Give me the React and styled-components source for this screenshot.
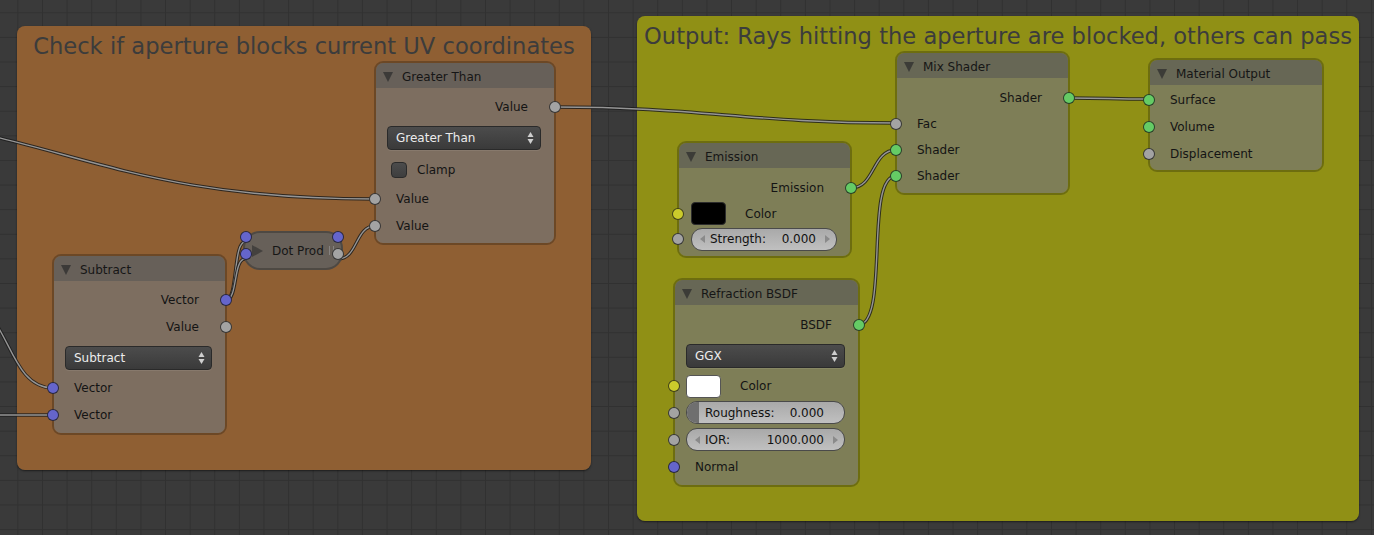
import styled, { createGlobalStyle } from "styled-components";

const GlobalStyle = createGlobalStyle`
  html, body {
    margin: 0;
    padding: 0;
  }
  body {
    background: #393939;
    font-family: "DejaVu Sans", "Noto Sans", sans-serif;
    overflow: hidden;
  }
`;

const SOCKET = {
  grey: "#a3a3a3",
  blue: "#6565cb",
  green: "#65cb65",
  yellow: "#cbcb2b",
};

const Canvas = styled.div`
  position: relative;
  width: 1374px;
  height: 535px;
  overflow: hidden;
  background-color: #3a3a3a;
  background-image: linear-gradient(90deg, #313131 1px, transparent 1px),
    linear-gradient(180deg, #313131 1px, transparent 1px);
  background-size: 24.62px 24.62px;
  background-position: 17.4px 0, 0 12.3px;
`;

const Frame = styled.section`
  position: absolute;
  left: ${(p) => p.$x}px;
  top: ${(p) => p.$y}px;
  width: ${(p) => p.$w}px;
  height: ${(p) => p.$h}px;
  box-sizing: border-box;
  padding-top: 7px;
  border-radius: 8px;
  background: ${(p) => p.$color};
  box-shadow: 0 1px 2px rgba(0, 0, 0, 0.5);
  display: flex;
  flex-direction: column;
  align-items: center;
`;

const FrameTitle = styled.h2`
  margin: 0;
  font-weight: normal;
  font-size: 22.6px;
  line-height: 26px;
  color: #3c3c3c;
  white-space: nowrap;
`;

const Wires = styled.svg`
  position: absolute;
  left: 0;
  top: 0;
  width: 1374px;
  height: 535px;
  pointer-events: none;
`;

const NodeBox = styled.div`
  position: absolute;
  left: ${(p) => p.$x}px;
  top: ${(p) => p.$y}px;
  width: ${(p) => p.$w}px;
  box-sizing: border-box;
  border: 2px solid rgba(0, 0, 0, 0.24);
  border-radius: 9px;
  font-size: 12px;
  color: #141414;
  display: flex;
  flex-direction: column;
`;

const Header = styled.div`
  height: 25px;
  box-sizing: border-box;
  padding: 3px 0 0 7px;
  display: flex;
  align-items: center;
  gap: 9px;
  border-radius: 7px 7px 0 0;
  background: rgba(96, 96, 96, 0.85);
  color: #161616;
`;

const Collapse = styled.span`
  width: 0;
  height: 0;
  border-left: 5px solid transparent;
  border-right: 5px solid transparent;
  border-top: 10px solid rgba(45, 45, 45, 0.75);
`;

const Body = styled.div`
  display: flex;
  flex-direction: column;
  padding: ${(p) => p.$pt}px 0 ${(p) => p.$pb}px;
  border-radius: 0 0 7px 7px;
  background: rgba(117, 117, 117, 0.69);
`;

const SocketRow = styled.div`
  position: relative;
  height: ${(p) => p.$h}px;
  display: flex;
  align-items: center;
  justify-content: ${(p) => (p.$out ? "flex-end" : "flex-start")};
  padding: ${(p) => (p.$out ? "0 26px 0 0" : "0 0 0 20px")};
`;

const WidgetRow = styled.div`
  position: relative;
  height: ${(p) => p.$h}px;
  display: flex;
  align-items: center;
  padding: 0 13px 0 ${(p) => p.$left ?? 11}px;
`;

const Socket = styled.span`
  position: absolute;
  top: 50%;
  ${(p) => (p.$out ? "right: -7px;" : "left: -7px;")}
  width: 12px;
  height: 12px;
  box-sizing: border-box;
  margin-top: -6px;
  border-radius: 50%;
  border: 1px solid rgba(20, 20, 20, 0.75);
  background: ${(p) => SOCKET[p.$type]};
`;

const Dropdown = styled.div`
  flex: 1;
  height: 24px;
  box-sizing: border-box;
  padding: 0 6px 0 8px;
  display: flex;
  align-items: center;
  justify-content: space-between;
  border: 1px solid #2a2a2a;
  border-radius: 4px;
  background: linear-gradient(#4c4c4c, #3a3a3a);
  color: #ececec;
  box-shadow: 0 1px 0 rgba(255, 255, 255, 0.08);
`;

const Checkbox = styled.span`
  width: 16px;
  height: 16px;
  margin-left: 3px;
  box-sizing: border-box;
  border: 1px solid #2a2a2a;
  border-radius: 4px;
  background: linear-gradient(#4c4c4c, #3e3e3e);
`;

const CheckLabel = styled.span`
  margin-left: 10px;
`;

const Swatch = styled.span`
  width: 35px;
  height: 23px;
  box-sizing: border-box;
  border: 1px solid ${(p) => (p.$white ? "#555" : "#2c2c2c")};
  border-radius: 4px;
  background: ${(p) => (p.$white ? "#ffffff" : "#000000")};
`;

const SwatchLabel = styled.span`
  margin-left: 19px;
`;

const Slider = styled.div`
  position: relative;
  flex: 1;
  height: 23px;
  box-sizing: border-box;
  padding: 0 6px 0 8px;
  display: flex;
  align-items: center;
  border: 1px solid #4a4a4a;
  border-radius: 11px;
  overflow: hidden;
  background: linear-gradient(#a9a9a9, #c0c0c0);
  color: #111;
`;

const SliderFill = styled.span`
  position: absolute;
  left: 0;
  top: 0;
  bottom: 0;
  width: 12px;
  background: #6f6f6f;
`;

const SliderText = styled.span`
  position: relative;
  flex: 1;
  display: flex;
  justify-content: space-between;
  margin: 0 9px 0 5px;
`;

const Collapsed = styled.div`
  position: absolute;
  left: 243px;
  top: 231px;
  width: 100px;
  height: 39px;
  box-sizing: border-box;
  padding-left: 7px;
  display: flex;
  align-items: center;
  border: 2px solid rgba(0, 0, 0, 0.24);
  border-radius: 17px;
  background: rgba(96, 96, 96, 0.85);
  font-size: 12px;
  color: #161616;
`;

const PlayTri = styled.span`
  width: 0;
  height: 0;
  border-top: 6px solid transparent;
  border-bottom: 6px solid transparent;
  border-left: 11px solid rgba(45, 45, 45, 0.6);
  margin-right: 9px;
`;

const Grip = styled.span`
  margin-left: 5px;
  width: 3px;
  height: 9px;
  border-left: 1px solid #9a9a9a;
  border-right: 1px solid #9a9a9a;
  opacity: 0.6;
`;

const PinSocket = styled(Socket)`
  top: ${(p) => p.$top}px;
  ${(p) => (p.$out ? "right: -3px;" : "left: -5px;")}
`;

const DropArrows = () => (
  <svg width="7" height="14" viewBox="0 0 7 14">
    <polygon points="0.5,6 3.5,1 6.5,6" fill="#cfcfcf" />
    <polygon points="0.5,8 3.5,13 6.5,8" fill="#cfcfcf" />
  </svg>
);

const Arrow = ({ dir, hidden }) => (
  <svg width="5" height="8" viewBox="0 0 5 8" style={{ visibility: hidden ? "hidden" : "visible", position: "relative" }}>
    <polygon points={dir === "l" ? "5,0 0,4 5,8" : "0,0 5,4 0,8"} fill="#8a8a8a" />
  </svg>
);

const Node = ({ x, y, w, title, pt, pb, children }) => (
  <NodeBox $x={x} $y={y} $w={w}>
    <Header>
      <Collapse />
      {title}
    </Header>
    <Body $pt={pt} $pb={pb}>
      {children}
    </Body>
  </NodeBox>
);

const Out = ({ h, type, children }) => (
  <SocketRow $h={h} $out>
    {children}
    <Socket $type={type} $out />
  </SocketRow>
);

const In = ({ h, type, children }) => (
  <SocketRow $h={h}>
    <Socket $type={type} />
    {children}
  </SocketRow>
);

const ValueSlider = ({ label, value, arrows, fill }) => (
  <Slider>
    {fill && <SliderFill />}
    <Arrow dir="l" hidden={!arrows} />
    <SliderText>
      <span>{label}</span>
      <span>{value}</span>
    </SliderText>
    <Arrow dir="r" hidden={!arrows} />
  </Slider>
);

const WIRES = [
  "M555 107 C700 107, 750 123, 896 123",
  "M-250 110 C50 110, 75 199, 375 199",
  "M226 300 C238 300, 233 242, 245 242",
  "M226 300 C238 300, 233 259, 245 259",
  "M338 259 C358 259, 355 226, 375 226",
  "M-40 300 C10 300, 5 388, 53 388",
  "M-10 415 L53 415",
  "M851 188 C875 188, 872 150, 896 150",
  "M858 325 C890 325, 864 176, 896 176",
  "M1069 98 C1110 98, 1108 99, 1149 99",
];

export default function App() {
  return (
    <>
      <GlobalStyle />
      <Canvas>
        <Frame $x={17} $y={26} $w={574} $h={444} $color="rgba(151, 99, 51, 0.92)">
          <FrameTitle>Check if aperture blocks current UV coordinates</FrameTitle>
        </Frame>
        <Frame $x={637} $y={16} $w={722} $h={505} $color="rgba(152, 152, 18, 0.92)">
          <FrameTitle>Output: Rays hitting the aperture are blocked, others can pass</FrameTitle>
        </Frame>

        <Wires viewBox="0 0 1374 535">
          {WIRES.map((d) => (
            <g key={d} fill="none">
              <path d={d} stroke="#1c1c1c" strokeOpacity="0.85" strokeWidth="3.4" />
              <path d={d} stroke="#959595" strokeWidth="1.4" />
            </g>
          ))}
        </Wires>

        <Node x={374} y={61} w={182} title="Greater Than" pt={6} pb={4}>
          <Out h={26} type="grey">Value</Out>
          <WidgetRow $h={35}>
            <Dropdown>
              Greater Than
              <DropArrows />
            </Dropdown>
          </WidgetRow>
          <WidgetRow $h={30} $left={12}>
            <Checkbox />
            <CheckLabel>Clamp</CheckLabel>
          </WidgetRow>
          <In h={27} type="grey">Value</In>
          <In h={27} type="grey">Value</In>
        </Node>

        <Collapsed>
          <PinSocket $type="blue" $top={4} />
          <PinSocket $type="blue" $top={21} />
          <PlayTri />
          Dot Prod
          <Grip />
          <PinSocket $type="blue" $top={4} $out />
          <PinSocket $type="grey" $top={21} $out />
        </Collapsed>

        <Node x={52} y={254} w={175} title="Subtract" pt={6} pb={5}>
          <Out h={26} type="blue">Vector</Out>
          <Out h={27} type="grey">Value</Out>
          <WidgetRow $h={35}>
            <Dropdown>
              Subtract
              <DropArrows />
            </Dropdown>
          </WidgetRow>
          <In h={26} type="blue">Vector</In>
          <In h={27} type="blue">Vector</In>
        </Node>

        <Node x={895} y={51} w={175} title="Mix Shader" pt={7} pb={4}>
          <Out h={26} type="green">Shader</Out>
          <In h={26} type="grey">Fac</In>
          <In h={26} type="green">Shader</In>
          <In h={26} type="green">Shader</In>
        </Node>

        <Node x={1148} y={58} w={176} title="Material Output" pt={1} pb={3}>
          <In h={27} type="green">Surface</In>
          <In h={27} type="green">Volume</In>
          <In h={27} type="grey">Displacement</In>
        </Node>

        <Node x={677} y={141} w={175} title="Emission" pt={7} pb={4}>
          <Out h={26} type="green">Emission</Out>
          <WidgetRow $h={25} $left={12}>
            <Socket $type="yellow" />
            <Swatch />
            <SwatchLabel>Color</SwatchLabel>
          </WidgetRow>
          <WidgetRow $h={26} $left={12}>
            <Socket $type="grey" />
            <ValueSlider label="Strength:" value="0.000" arrows />
          </WidgetRow>
        </Node>

        <Node x={673} y={278} w={187} title="Refraction BSDF" pt={7} pb={5}>
          <Out h={26} type="green">BSDF</Out>
          <WidgetRow $h={35}>
            <Dropdown>
              GGX
              <DropArrows />
            </Dropdown>
          </WidgetRow>
          <WidgetRow $h={26}>
            <Socket $type="yellow" />
            <Swatch $white />
            <SwatchLabel>Color</SwatchLabel>
          </WidgetRow>
          <WidgetRow $h={27}>
            <Socket $type="grey" />
            <ValueSlider label="Roughness:" value="0.000" fill />
          </WidgetRow>
          <WidgetRow $h={27}>
            <Socket $type="grey" />
            <ValueSlider label="IOR:" value="1000.000" arrows />
          </WidgetRow>
          <In h={27} type="blue">Normal</In>
        </Node>
      </Canvas>
    </>
  );
}
